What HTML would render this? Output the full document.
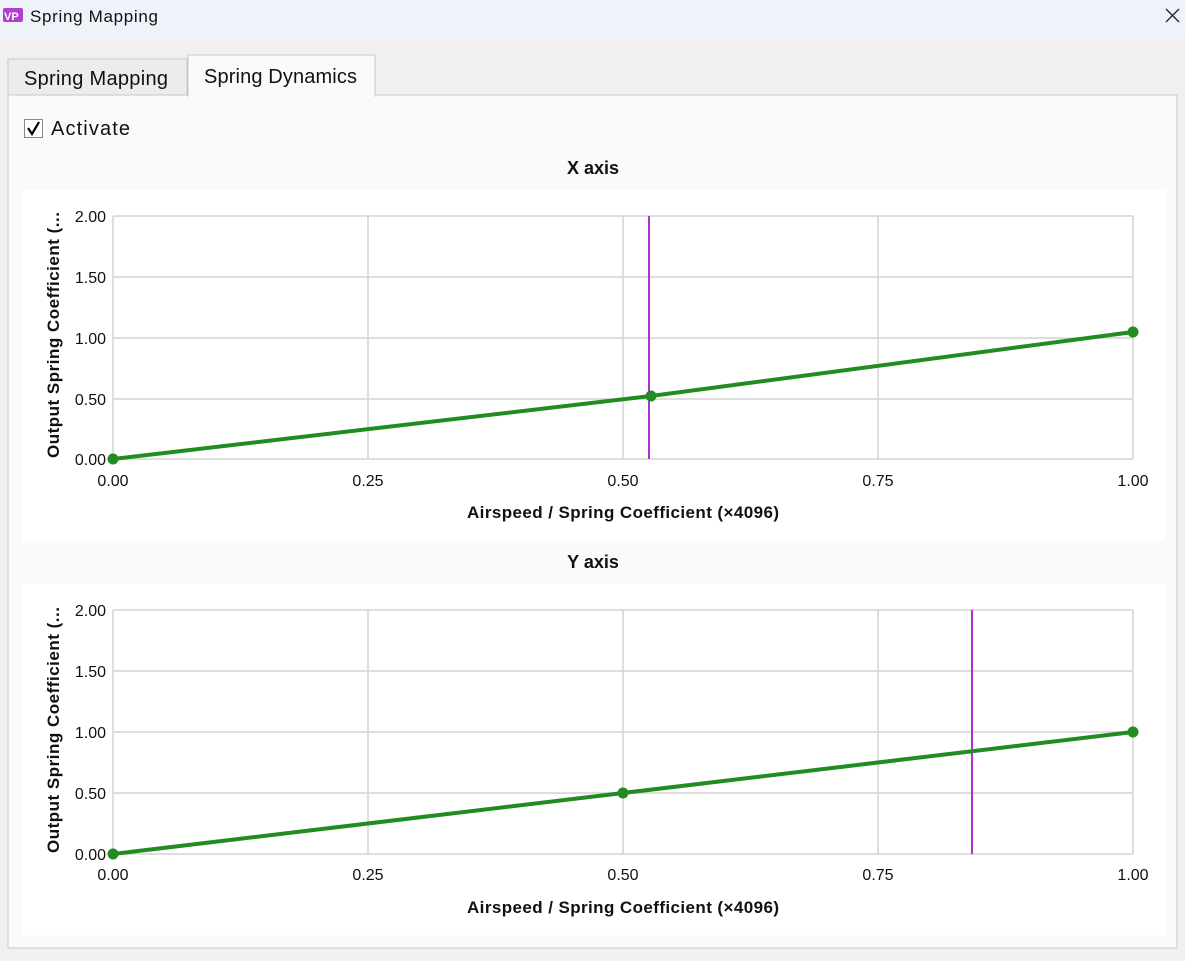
<!DOCTYPE html>
<html><head><meta charset="utf-8"><style>
body{margin:0;width:1185px;height:961px;background:#f0f0f0;font-family:"Liberation Sans",sans-serif;overflow:hidden;position:relative}
</style></head><body>
<svg width="1185" height="961" xmlns="http://www.w3.org/2000/svg" style="position:absolute;left:0;top:0" font-family="Liberation Sans, sans-serif">
<rect x="0" y="0" width="1185" height="38" fill="#eef3fa"/>
<rect x="3" y="8" width="20" height="14" rx="2" fill="#b040d0"/>
<text x="4" y="20" font-size="11" font-weight="bold" fill="#fff">VP</text>
<text x="30" y="22" font-size="17" fill="#111" textLength="128">Spring Mapping</text>
<path d="M1166 9 L1179 22 M1179 9 L1166 22" stroke="#222" stroke-width="1.3"/>
<rect x="8" y="95" width="1169" height="853" fill="#fafafa" stroke="#c8c8c8"/>
<rect x="8" y="59" width="179" height="36" fill="#ececec" stroke="#c8c8c8"/>
<text x="24" y="85" font-size="20" fill="#111" textLength="144">Spring Mapping</text>
<rect x="188" y="55" width="187" height="41" fill="#fafafa" stroke="#c8c8c8"/>
<rect x="189" y="94" width="185" height="3" fill="#fafafa"/>
<text x="204" y="83" font-size="20" fill="#111" textLength="153">Spring Dynamics</text>
<rect x="24.5" y="119.5" width="18" height="18" fill="#fff" stroke="#888"/>
<path d="M28 128 L32 134 L39 122" stroke="#000" stroke-width="2.2" fill="none"/>
<text x="51" y="135" font-size="20" fill="#111" textLength="79">Activate</text>

<g>
<text x="593" y="174" font-size="18" font-weight="bold" text-anchor="middle" fill="#111">X axis</text>
<rect x="22" y="190" width="1143" height="351" fill="#fff"/>
<g stroke="#d3d3d3" stroke-width="1.5">
<line x1="113" y1="216" x2="1133" y2="216"/><line x1="113" y1="277" x2="1133" y2="277"/><line x1="113" y1="338" x2="1133" y2="338"/><line x1="113" y1="399" x2="1133" y2="399"/><line x1="113" y1="459" x2="1133" y2="459"/>
<line x1="113" y1="216" x2="113" y2="459"/><line x1="368" y1="216" x2="368" y2="459"/><line x1="623" y1="216" x2="623" y2="459"/><line x1="878" y1="216" x2="878" y2="459"/><line x1="1133" y1="216" x2="1133" y2="459"/>
</g>
<g font-size="16" fill="#111" text-anchor="end">
<text x="106" y="222">2.00</text><text x="106" y="283">1.50</text><text x="106" y="344">1.00</text><text x="106" y="405">0.50</text><text x="106" y="465">0.00</text></g>
<g font-size="16" fill="#111" text-anchor="middle">
<text x="113" y="486">0.00</text><text x="368" y="486">0.25</text><text x="623" y="486">0.50</text><text x="878" y="486">0.75</text><text x="1133" y="486">1.00</text></g>
<text x="467" y="518" font-size="17" font-weight="bold" fill="#111" textLength="312">Airspeed / Spring Coefficient (×4096)</text>
<text transform="translate(59,458) rotate(-90)" font-size="17" font-weight="bold" fill="#111" textLength="246">Output Spring Coefficient (...</text>
<line x1="649" y1="216" x2="649" y2="459" stroke="#b030d0" stroke-width="2"/>
<polyline points="113,459 651,396 1133,332" fill="none" stroke="#228b22" stroke-width="4"/>
<circle cx="113" cy="459" r="5.5" fill="#228b22"/><circle cx="651" cy="396" r="5.5" fill="#228b22"/><circle cx="1133" cy="332" r="5.5" fill="#228b22"/>
</g>

<g>
<text x="593" y="568" font-size="18" font-weight="bold" text-anchor="middle" fill="#111">Y axis</text>
<rect x="22" y="584" width="1143" height="351" fill="#fff"/>
<g stroke="#d3d3d3" stroke-width="1.5">
<line x1="113" y1="610" x2="1133" y2="610"/><line x1="113" y1="671" x2="1133" y2="671"/><line x1="113" y1="732" x2="1133" y2="732"/><line x1="113" y1="793" x2="1133" y2="793"/><line x1="113" y1="854" x2="1133" y2="854"/>
<line x1="113" y1="610" x2="113" y2="854"/><line x1="368" y1="610" x2="368" y2="854"/><line x1="623" y1="610" x2="623" y2="854"/><line x1="878" y1="610" x2="878" y2="854"/><line x1="1133" y1="610" x2="1133" y2="854"/>
</g>
<g font-size="16" fill="#111" text-anchor="end">
<text x="106" y="616">2.00</text><text x="106" y="677">1.50</text><text x="106" y="738">1.00</text><text x="106" y="799">0.50</text><text x="106" y="860">0.00</text></g>
<g font-size="16" fill="#111" text-anchor="middle">
<text x="113" y="880">0.00</text><text x="368" y="880">0.25</text><text x="623" y="880">0.50</text><text x="878" y="880">0.75</text><text x="1133" y="880">1.00</text></g>
<text x="467" y="913" font-size="17" font-weight="bold" fill="#111" textLength="312">Airspeed / Spring Coefficient (×4096)</text>
<text transform="translate(59,853) rotate(-90)" font-size="17" font-weight="bold" fill="#111" textLength="246">Output Spring Coefficient (...</text>
<line x1="972" y1="610" x2="972" y2="854" stroke="#b030d0" stroke-width="2"/>
<polyline points="113,854 623,793 1133,732" fill="none" stroke="#228b22" stroke-width="4"/>
<circle cx="113" cy="854" r="5.5" fill="#228b22"/><circle cx="623" cy="793" r="5.5" fill="#228b22"/><circle cx="1133" cy="732" r="5.5" fill="#228b22"/>
</g>
</svg>
</body></html>
